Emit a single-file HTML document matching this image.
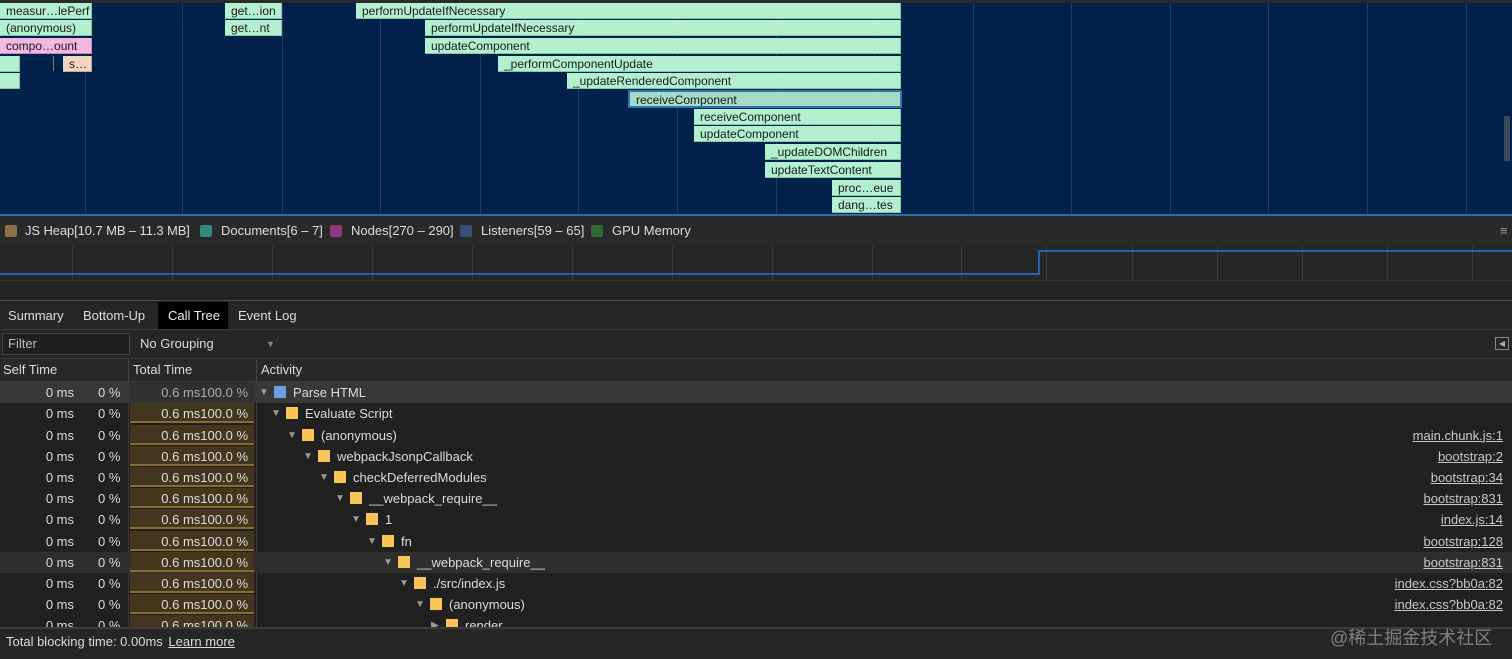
<!DOCTYPE html>
<html><head><meta charset="utf-8"><style>
*{margin:0;padding:0;box-sizing:border-box}
body{width:1512px;height:659px;overflow:hidden;background:#242424;font-family:"Liberation Sans",Arial,sans-serif;font-size:13px;color:#dcdcdc;position:relative}
.a{position:absolute}
.fl{position:absolute;left:0;top:0;width:1512px;height:216px;background:#00224a}
.g{position:absolute;top:3px;width:1px;height:211px;background:#1d3d63}
.b{position:absolute;height:16px;background:#b3f0cf;color:#1a1a1a;font-size:12px;line-height:16px;padding-left:6px;white-space:nowrap;overflow:hidden;border:1px solid #86c6a6;border-top:none;border-left:none}
.row{position:absolute;left:0;width:1512px;height:21px;line-height:21px}
.st{position:absolute;right:1437px;text-align:right}
.tt{position:absolute;left:130px;width:124px;height:20px;background:#43361f;border-bottom:2px solid #8a6c2e;text-align:right;padding-right:6px}
.sq{position:absolute;top:4px;width:12px;height:12px;background:#f6c555}
.tri{position:absolute;top:0;font-size:10px;color:#999}
.lk{position:absolute;right:9px;text-decoration:underline;color:#c8c8c8}
.mg{position:absolute;top:246px;width:1px;height:34px;background:#3a3a3a}
</style></head><body>
<div class="a" style="left:0;top:0;width:1512px;height:3px;background:#2a2a2a"></div>
<div class="fl" style="top:3px;height:213px"></div>
<div class="g" style="left:85px"></div><div class="g" style="left:182px"></div><div class="g" style="left:282px"></div><div class="g" style="left:380px"></div><div class="g" style="left:480px"></div><div class="g" style="left:578px"></div><div class="g" style="left:677px"></div><div class="g" style="left:776px"></div><div class="g" style="left:874px"></div><div class="g" style="left:973px"></div><div class="g" style="left:1071px"></div><div class="g" style="left:1170px"></div><div class="g" style="left:1268px"></div><div class="g" style="left:1367px"></div><div class="g" style="left:1466px"></div>
<div class="a" style="left:1504px;top:116px;width:6px;height:45px;background:#3a4a5a"></div>
<div class="a" style="left:0;top:214px;width:1512px;height:2px;background:#2f6ea8"></div>

<div class="b" style="left:0;top:3px;width:92px">measur…lePerf</div>
<div class="b" style="left:0;top:20px;width:92px">(anonymous)</div>
<div class="b" style="left:0;top:38px;width:92px;background:#f2b8e2;border-color:#c98ab8">compo…ount</div>
<div class="b" style="left:0;top:56px;width:20px"></div>
<div class="a" style="left:53px;top:56px;width:1px;height:15px;background:#777"></div>
<div class="b" style="left:63px;top:56px;width:29px;background:#f4d5bd;border-color:#c9a98e">s…</div>
<div class="b" style="left:0;top:73px;width:20px"></div>
<div class="b" style="left:225px;top:3px;width:57px">get…ion</div>
<div class="b" style="left:225px;top:20px;width:57px">get…nt</div>
<div class="b" style="left:356px;top:3px;width:545px">performUpdateIfNecessary</div>
<div class="b" style="left:425px;top:20px;width:476px">performUpdateIfNecessary</div>
<div class="b" style="left:425px;top:38px;width:476px">updateComponent</div>
<div class="b" style="left:498px;top:56px;width:403px">_performComponentUpdate</div>
<div class="b" style="left:567px;top:73px;width:334px">_updateRenderedComponent</div>
<div class="b" style="left:628px;top:90px;width:274px;height:18px;background:#a6dcc6;border:2px solid #2a77b8">receiveComponent</div>
<div class="b" style="left:694px;top:109px;width:207px">receiveComponent</div>
<div class="b" style="left:694px;top:126px;width:207px">updateComponent</div>
<div class="b" style="left:765px;top:144px;width:136px">_updateDOMChildren</div>
<div class="b" style="left:765px;top:162px;width:136px">updateTextContent</div>
<div class="b" style="left:832px;top:180px;width:69px">proc…eue</div>
<div class="b" style="left:832px;top:197px;width:69px">dang…tes</div>

<div class="a" style="left:0;top:216px;width:1512px;height:30px;background:#292929;line-height:30px;font-size:13px;color:#ddd">
<span class="a" style="left:5px;top:9px;width:12px;height:12px;background:#8a7048;border-radius:2px"></span><span class="a" style="left:25px;letter-spacing:-0.1px">JS Heap[10.7 MB – 11.3 MB]</span>
<span class="a" style="left:200px;top:9px;width:12px;height:12px;background:#2f8a80;border-radius:2px"></span><span class="a" style="left:221px">Documents[6 – 7]</span>
<span class="a" style="left:330px;top:9px;width:12px;height:12px;background:#8a3a80;border-radius:2px"></span><span class="a" style="left:351px">Nodes[270 – 290]</span>
<span class="a" style="left:460px;top:9px;width:12px;height:12px;background:#3a4e78;border-radius:2px"></span><span class="a" style="left:481px">Listeners[59 – 65]</span>
<span class="a" style="left:591px;top:9px;width:12px;height:12px;background:#2f6a34;border-radius:2px"></span><span class="a" style="left:612px">GPU Memory</span>
<span class="a" style="left:1500px;color:#999">≡</span></div>
<div class="a" style="left:0;top:246px;width:1512px;height:35px;background:#262626;border-bottom:1px solid #333"></div>
<div class="mg" style="left:72px"></div><div class="mg" style="left:172px"></div><div class="mg" style="left:272px"></div><div class="mg" style="left:372px"></div><div class="mg" style="left:472px"></div><div class="mg" style="left:572px"></div><div class="mg" style="left:672px"></div><div class="mg" style="left:772px"></div><div class="mg" style="left:872px"></div><div class="mg" style="left:961px"></div><div class="mg" style="left:1046px"></div><div class="mg" style="left:1132px"></div><div class="mg" style="left:1217px"></div><div class="mg" style="left:1302px"></div><div class="mg" style="left:1387px"></div><div class="mg" style="left:1472px"></div>
<div class="a" style="left:0;top:273px;width:1040px;height:2px;background:#2a5fb0"></div>
<div class="a" style="left:1038px;top:250px;width:2px;height:25px;background:#2a5fb0"></div>
<div class="a" style="left:1038px;top:250px;width:474px;height:2px;background:#2a5fb0"></div>
<div class="a" style="left:0;top:300px;width:1512px;height:1px;background:#4a4a4a"></div>

<div class="a" style="left:0;top:302px;width:1512px;height:27px;background:#262626;line-height:27px">
<span class="a" style="left:8px">Summary</span><span class="a" style="left:83px">Bottom-Up</span>
<span class="a" style="left:158px;top:0;width:70px;height:27px;background:#000;padding-left:10px;color:#eee">Call Tree</span>
<span class="a" style="left:238px">Event Log</span></div>
<div class="a" style="left:0;top:329px;width:1512px;height:1px;background:#3a3a3a"></div>
<div class="a" style="left:0;top:330px;width:1512px;height:28px;background:#262626">
<div class="a" style="left:2px;top:3px;width:128px;height:22px;background:#1f1f1f;border:1px solid #444;line-height:20px;padding-left:5px;color:#bbb">Filter</div>
<span class="a" style="left:140px;top:6px">No Grouping</span><span class="a" style="left:266px;top:9px;font-size:9px;color:#888">▼</span>
<span class="a" style="left:1495px;top:7px;width:14px;height:13px;border:1px solid #888;font-size:8px;color:#aaa;line-height:11px;text-align:center">◀</span></div>
<div class="a" style="left:0;top:358px;width:1512px;height:1px;background:#3a3a3a"></div>
<div class="a" style="left:0;top:359px;width:1512px;height:22px;background:#282828;line-height:22px">
<span class="a" style="left:3px">Self Time</span><span class="a" style="left:133px">Total Time</span><span class="a" style="left:261px">Activity</span>
<span class="a" style="left:128px;top:0;width:1px;height:22px;background:#444"></span><span class="a" style="left:256px;top:0;width:1px;height:22px;background:#444"></span></div>
<div class="a" style="left:0;top:381px;width:1512px;height:1px;background:#3a3a3a"></div>

<div class="a" style="left:0;top:382px;width:1512px;height:245px;background:#202020;overflow:hidden">
<div class="a" style="left:128px;top:0;width:1px;height:245px;background:#3a3a3a"></div>
<div class="a" style="left:256px;top:0;width:1px;height:245px;background:#3a3a3a"></div>
<div class="row" style="top:0;background:#383838"><span class="st" style="left:0;width:74px;right:auto">0 ms</span><span class="a" style="left:98px">0 %</span><span class="tt" style="background:#303030;border:none;color:#aaa">0.6 ms100.0 %</span><span class="tri" style="left:259px">▼</span><span class="sq" style="left:274px;background:#6aa3e0"></span><span class="a" style="left:293px">Parse HTML</span></div>
<div class="row" style="top:21px"><span class="st" style="left:0;width:74px;right:auto">0 ms</span><span class="a" style="left:98px">0 %</span><span class="tt">0.6 ms100.0 %</span><span class="tri" style="left:271px">▼</span><span class="sq" style="left:286px"></span><span class="a" style="left:305px">Evaluate Script</span></div>
<div class="row" style="top:42.5px"><span class="st" style="left:0;width:74px;right:auto">0 ms</span><span class="a" style="left:98px">0 %</span><span class="tt">0.6 ms100.0 %</span><span class="tri" style="left:287px">▼</span><span class="sq" style="left:302px"></span><span class="a" style="left:321px">(anonymous)</span><span class="lk">main.chunk.js:1</span></div>
<div class="row" style="top:63.7px"><span class="st" style="left:0;width:74px;right:auto">0 ms</span><span class="a" style="left:98px">0 %</span><span class="tt">0.6 ms100.0 %</span><span class="tri" style="left:303px">▼</span><span class="sq" style="left:318px"></span><span class="a" style="left:337px">webpackJsonpCallback</span><span class="lk">bootstrap:2</span></div>
<div class="row" style="top:84.9px"><span class="st" style="left:0;width:74px;right:auto">0 ms</span><span class="a" style="left:98px">0 %</span><span class="tt">0.6 ms100.0 %</span><span class="tri" style="left:319px">▼</span><span class="sq" style="left:334px"></span><span class="a" style="left:353px">checkDeferredModules</span><span class="lk">bootstrap:34</span></div>
<div class="row" style="top:106.1px"><span class="st" style="left:0;width:74px;right:auto">0 ms</span><span class="a" style="left:98px">0 %</span><span class="tt">0.6 ms100.0 %</span><span class="tri" style="left:335px">▼</span><span class="sq" style="left:350px"></span><span class="a" style="left:369px">__webpack_require__</span><span class="lk">bootstrap:831</span></div>
<div class="row" style="top:127.3px"><span class="st" style="left:0;width:74px;right:auto">0 ms</span><span class="a" style="left:98px">0 %</span><span class="tt">0.6 ms100.0 %</span><span class="tri" style="left:351px">▼</span><span class="sq" style="left:366px"></span><span class="a" style="left:385px">1</span><span class="lk">index.js:14</span></div>
<div class="row" style="top:148.5px"><span class="st" style="left:0;width:74px;right:auto">0 ms</span><span class="a" style="left:98px">0 %</span><span class="tt">0.6 ms100.0 %</span><span class="tri" style="left:367px">▼</span><span class="sq" style="left:382px"></span><span class="a" style="left:401px">fn</span><span class="lk">bootstrap:128</span></div>
<div class="row" style="top:169.7px;background:#2e2e2e"><span class="st" style="left:0;width:74px;right:auto">0 ms</span><span class="a" style="left:98px">0 %</span><span class="tt">0.6 ms100.0 %</span><span class="tri" style="left:383px">▼</span><span class="sq" style="left:398px"></span><span class="a" style="left:417px">__webpack_require__</span><span class="lk">bootstrap:831</span></div>
<div class="row" style="top:190.9px"><span class="st" style="left:0;width:74px;right:auto">0 ms</span><span class="a" style="left:98px">0 %</span><span class="tt">0.6 ms100.0 %</span><span class="tri" style="left:399px">▼</span><span class="sq" style="left:414px"></span><span class="a" style="left:433px">./src/index.js</span><span class="lk">index.css?bb0a:82</span></div>
<div class="row" style="top:212.1px"><span class="st" style="left:0;width:74px;right:auto">0 ms</span><span class="a" style="left:98px">0 %</span><span class="tt">0.6 ms100.0 %</span><span class="tri" style="left:415px">▼</span><span class="sq" style="left:430px"></span><span class="a" style="left:449px">(anonymous)</span><span class="lk">index.css?bb0a:82</span></div>
<div class="row" style="top:233.3px"><span class="st" style="left:0;width:74px;right:auto">0 ms</span><span class="a" style="left:98px">0 %</span><span class="tt">0.6 ms100.0 %</span><span class="tri" style="left:431px">▶</span><span class="sq" style="left:446px"></span><span class="a" style="left:465px">render</span></div>
</div>
<div class="a" style="left:0;top:627px;width:1512px;height:2px;background:#3c3c3c"></div>
<div class="a" style="left:0;top:629px;width:1512px;height:30px;background:#262626;line-height:26px">
<span class="a" style="left:6px">Total blocking time: 0.00ms <u style="margin-left:2px">Learn more</u></span>
<span class="a" style="left:1330px;top:-4px;font-family:'Liberation Sans','Noto Sans CJK SC',sans-serif;font-size:18px;color:rgba(200,200,200,0.55)">@稀土掘金技术社区</span></div>
</body></html>
